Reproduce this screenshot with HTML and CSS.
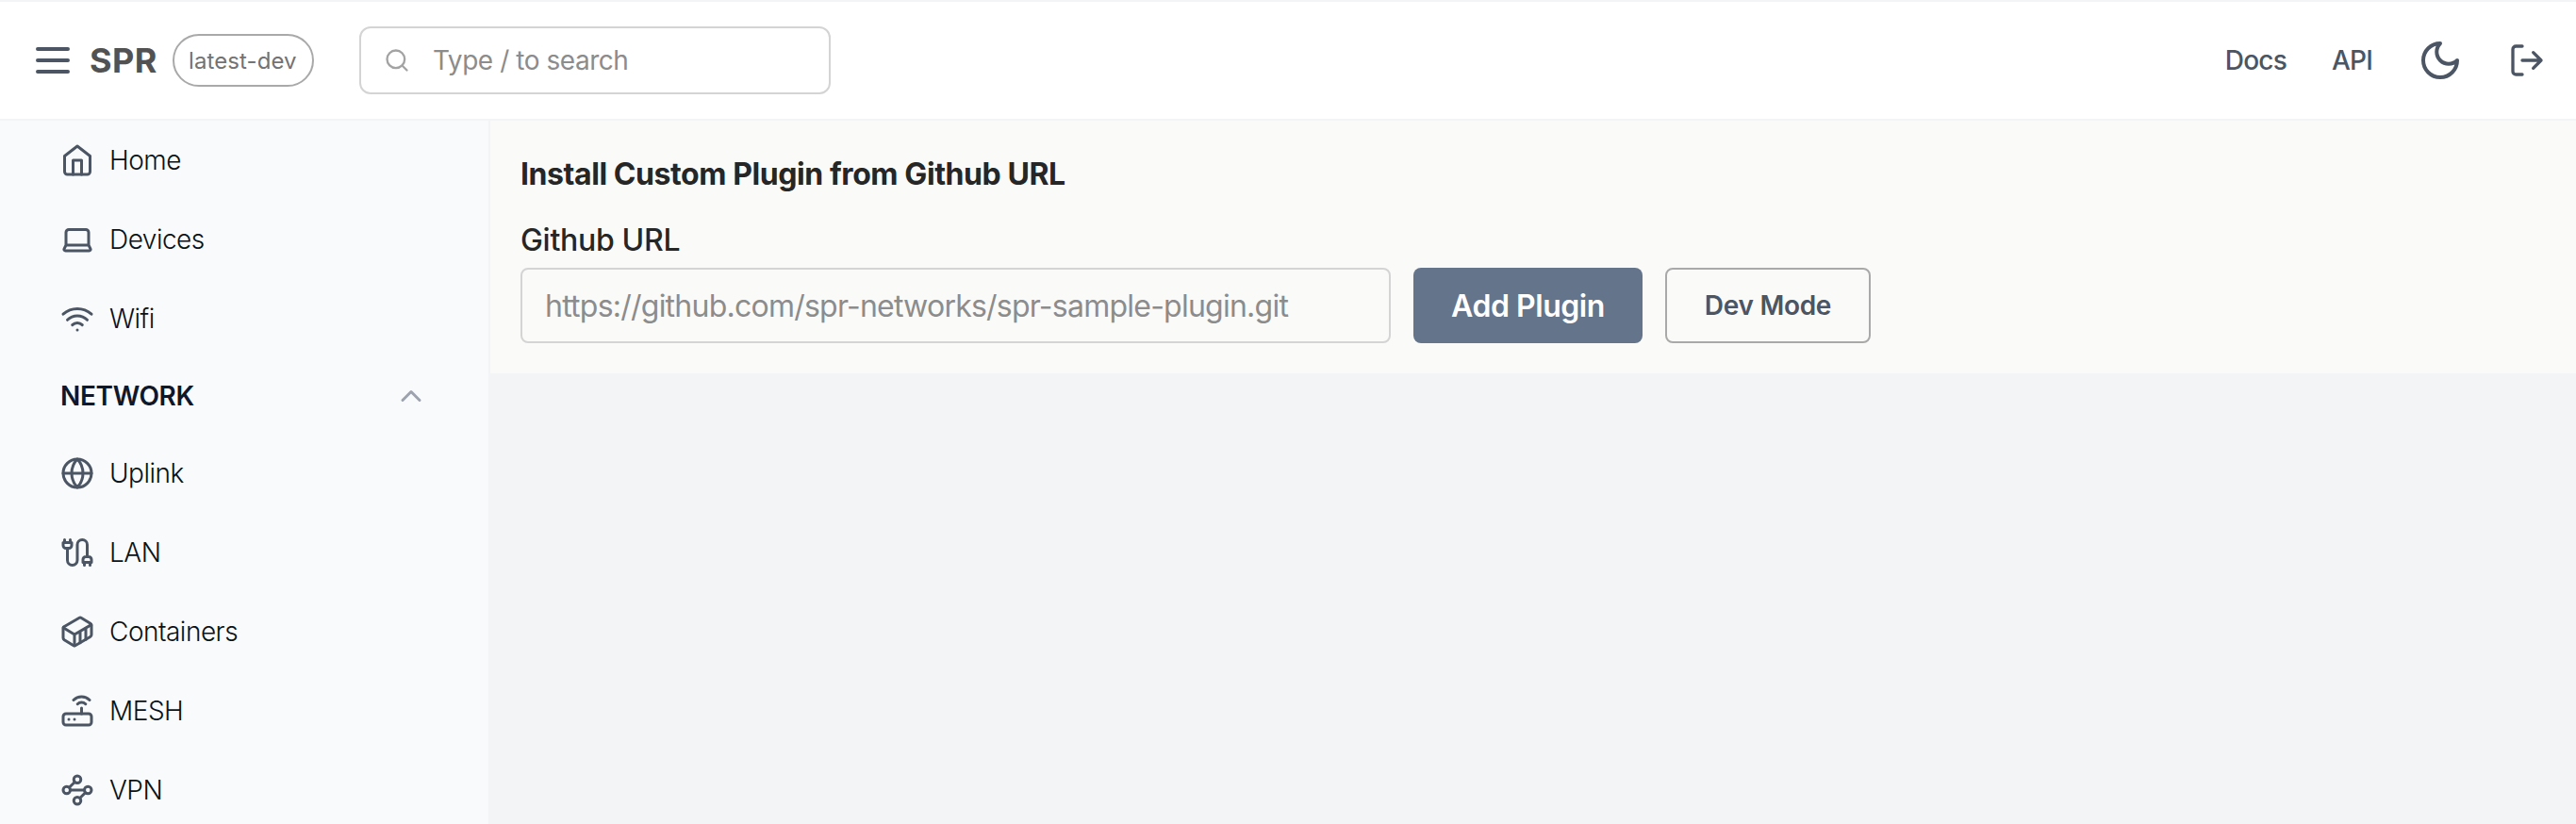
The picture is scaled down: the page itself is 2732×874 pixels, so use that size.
FILE: index.html
```html
<!DOCTYPE html>
<html lang="en">
<head>
<meta charset="utf-8">
<title>SPR</title>
<link rel="stylesheet" href="styles.css">
</head>
<body>
<header class="navbar">
  <div class="navbar-left">
    <svg class="icon icon-lg" viewBox="0 0 24 24"><path d="M4 6h16M4 12h16M4 18h16"/></svg>
    <span class="brand">SPR</span>
    <span class="badge"><span>latest-dev</span></span>
    <div class="search">
      <svg class="icon icon-search" viewBox="0 0 24 24"><circle cx="11" cy="11" r="8"/><path d="m21 21-4.3-4.3"/></svg>
      <span>Type / to search</span>
    </div>
  </div>
  <nav class="navbar-right">
    <a class="nav-link">Docs</a>
    <a class="nav-link">API</a>
    <svg class="icon icon-lg" viewBox="0 0 24 24"><path d="M12 3a6 6 0 0 0 9 9 9 9 0 1 1-9-9Z"/></svg>
    <svg class="icon icon-logout" viewBox="0 0 24 24"><path d="M9 21H5a2 2 0 0 1-2-2V5a2 2 0 0 1 2-2h4M16 17l5-5-5-5M21 12H9"/></svg>
  </nav>
</header>
<div class="layout">
  <aside class="sidebar">
    <a class="item"><svg class="icon" viewBox="0 0 24 24"><path d="m3 9 9-7 9 7v11a2 2 0 0 1-2 2H5a2 2 0 0 1-2-2z"/><path d="M9 22V12h6v10"/></svg><span>Home</span></a>
    <a class="item"><svg class="icon" viewBox="0 0 24 24"><path d="M20 16V7a2 2 0 0 0-2-2H6a2 2 0 0 0-2 2v9m16 0H4m16 0 1.28 2.55a1 1 0 0 1-.9 1.45H3.62a1 1 0 0 1-.9-1.45L4 16"/></svg><span>Devices</span></a>
    <a class="item"><svg class="icon" viewBox="0 0 24 24"><path d="M12 20h.01M2 8.82a15 15 0 0 1 20 0M5 12.859a10 10 0 0 1 14 0M8.5 16.429a5 5 0 0 1 7 0"/></svg><span>Wifi</span></a>
    <div class="group"><span>NETWORK</span><svg class="icon icon-chevron" viewBox="0 0 24 24"><path d="m18 15-6-6-6 6"/></svg></div>
    <a class="item"><svg class="icon" viewBox="0 0 24 24"><circle cx="12" cy="12" r="10"/><path d="M12 2a14.5 14.5 0 0 0 0 20 14.5 14.5 0 0 0 0-20M2 12h20"/></svg><span>Uplink</span></a>
    <a class="item"><svg class="icon" viewBox="0 0 24 24"><path d="M4 9a2 2 0 0 1-2-2V5h6v2a2 2 0 0 1-2 2ZM3 5V3M7 5V3M19 15V6.5a3.5 3.5 0 0 0-7 0v11a3.5 3.5 0 0 1-7 0V9M17 21v-2M21 21v-2M22 19h-6v-2a2 2 0 0 1 2-2h2a2 2 0 0 1 2 2Z"/></svg><span>LAN</span></a>
    <a class="item"><svg class="icon" viewBox="0 0 24 24"><path d="M22 7.7c0-.6-.4-1.2-.8-1.5l-6.3-3.9a1.72 1.72 0 0 0-1.7 0l-10.3 6c-.5.2-.9.8-.9 1.4v6.6c0 .5.4 1.2.8 1.5l6.3 3.9a1.72 1.72 0 0 0 1.7 0l10.3-6c.5-.3.9-1 .9-1.5Z"/><path d="M10 21.9V14L2.1 9.1M10 14l11.9-6.9M14 19.8v-8.1M18 17.5V9.4"/></svg><span>Containers</span></a>
    <a class="item"><svg class="icon" viewBox="0 0 24 24"><rect width="20" height="8" x="2" y="14" rx="2"/><path d="M6.01 18H6M10.01 18H10M15 10v4M17.84 7.17a4 4 0 0 0-5.66 0M20.66 4.34a8 8 0 0 0-11.31 0"/></svg><span>MESH</span></a>
    <a class="item"><svg class="icon" viewBox="0 0 24 24"><circle cx="12" cy="4.5" r="2.5"/><path d="m10.2 6.3-3.9 3.9"/><circle cx="4.5" cy="12" r="2.5"/><path d="M7 12h10"/><circle cx="19.5" cy="12" r="2.5"/><path d="m13.8 17.7 3.9-3.9"/><circle cx="12" cy="19.5" r="2.5"/></svg><span>VPN</span></a>
  </aside>
  <main class="main">
    <section class="panel">
      <h1 class="title">Install Custom Plugin from Github URL</h1>
      <label class="label">Github URL</label>
      <div class="form-row">
        <div class="input"><span>https://github.com/spr-networks/spr-sample-plugin.git</span></div>
        <button class="btn btn-primary">Add Plugin</button>
        <button class="btn btn-outline">Dev Mode</button>
      </div>
    </section>
  </main>
</div>
</body>
</html>
```
FILE: styles.css
```css
* { box-sizing: border-box; }
body {
  margin: 0;
  height: 874px;
  display: flex;
  flex-direction: column;
  overflow: hidden;
  font-family: Inter, "Liberation Sans", sans-serif;
  font-size: 28px;
  background: #f3f4f6;
  white-space: nowrap;
}
.icon {
  width: 36px;
  height: 36px;
  flex: none;
  fill: none;
  stroke: #4b5563;
  stroke-width: 2;
  stroke-linecap: round;
  stroke-linejoin: round;
}
.icon-lg { width: 48px; height: 48px; }
.icon-search { width: 28px; height: 28px; stroke: #a3a3a3; }
.icon-logout { width: 40px; height: 40px; }
.icon-chevron { stroke: #9ca3af; }

.navbar {
  flex: none;
  height: 128px;
  display: flex;
  justify-content: space-between;
  align-items: center;
  padding: 0 32px;
  background: #fff;
  border-top: 2px solid #f3f4f6;
  border-bottom: 2px solid #f3f4f6;
}
.navbar-left, .navbar-right { display: flex; align-items: center; }
.brand {
  width: 87px;
  margin-left: 15px;
  font-size: 36px;
  font-weight: 700;
  letter-spacing: 0.4px;
  color: #525252;
}
.badge {
  width: 150px;
  height: 56px;
  margin: 0 48px 0 1px;
  padding-left: 15px;
  display: flex;
  align-items: center;
  border: 2px solid #a9a9a9;
  border-radius: 28px;
  font-size: 24px;
  letter-spacing: 0.1px;
  color: #737373;
}
.search {
  width: 500px;
  height: 72px;
  display: flex;
  align-items: center;
  gap: 24px;
  padding-left: 24px;
  border: 2px solid #d4d4d4;
  border-radius: 12px;
  letter-spacing: -0.45px;
  color: #8c8c8c;
}
.navbar-right { color: #4b5563; gap: 48px; }
.nav-link { font-weight: 500; letter-spacing: -0.8px; }

.layout { flex: 1; display: flex; min-height: 0; }
.sidebar {
  width: 520px;
  flex: none;
  overflow: hidden;
  background: #f9fafc;
  border-right: 2px solid #f3f4f6;
  color: #111827;
}
.item {
  height: 84px;
  display: flex;
  align-items: center;
  gap: 16px;
  padding-left: 64px;
  font-weight: 350;
  letter-spacing: -0.5px;
  color: #0b1215;
}
.group {
  height: 80px;
  display: flex;
  align-items: center;
  justify-content: space-between;
  padding: 0 64px;
  font-weight: 600;
  letter-spacing: -0.35px;
  color: #0f172a;
}
.main { flex: 1; }
.panel { height: 268px; padding: 32px; background: #fafaf9; color: #262626; }
.title { margin: 0; height: 50px; line-height: 50px; font-size: 32px; font-weight: 700; letter-spacing: -0.42px; }
.label { display: block; margin-top: 20px; height: 54px; line-height: 50px; font-size: 32px; font-weight: 500; letter-spacing: -0.3px; }
.form-row { display: flex; gap: 24px; }
.input {
  width: 923px;
  height: 80px;
  display: flex;
  align-items: center;
  padding-left: 24px;
  border: 2px solid #d4d4d4;
  border-radius: 8px;
  font-size: 32px;
  letter-spacing: -0.76px;
  color: #8c8c8c;
}
.btn {
  height: 80px;
  padding: 0;
  border-radius: 8px;
  font-family: inherit;
  font-weight: 600;
}
.btn-primary { width: 243px; border: 0; background: #64748b; color: #fff; font-size: 32px; letter-spacing: -0.45px; }
.btn-outline { width: 218px; border: 2px solid #a9a9a9; background: transparent; color: #4b5563; font-size: 28px; letter-spacing: -0.3px; }
```
